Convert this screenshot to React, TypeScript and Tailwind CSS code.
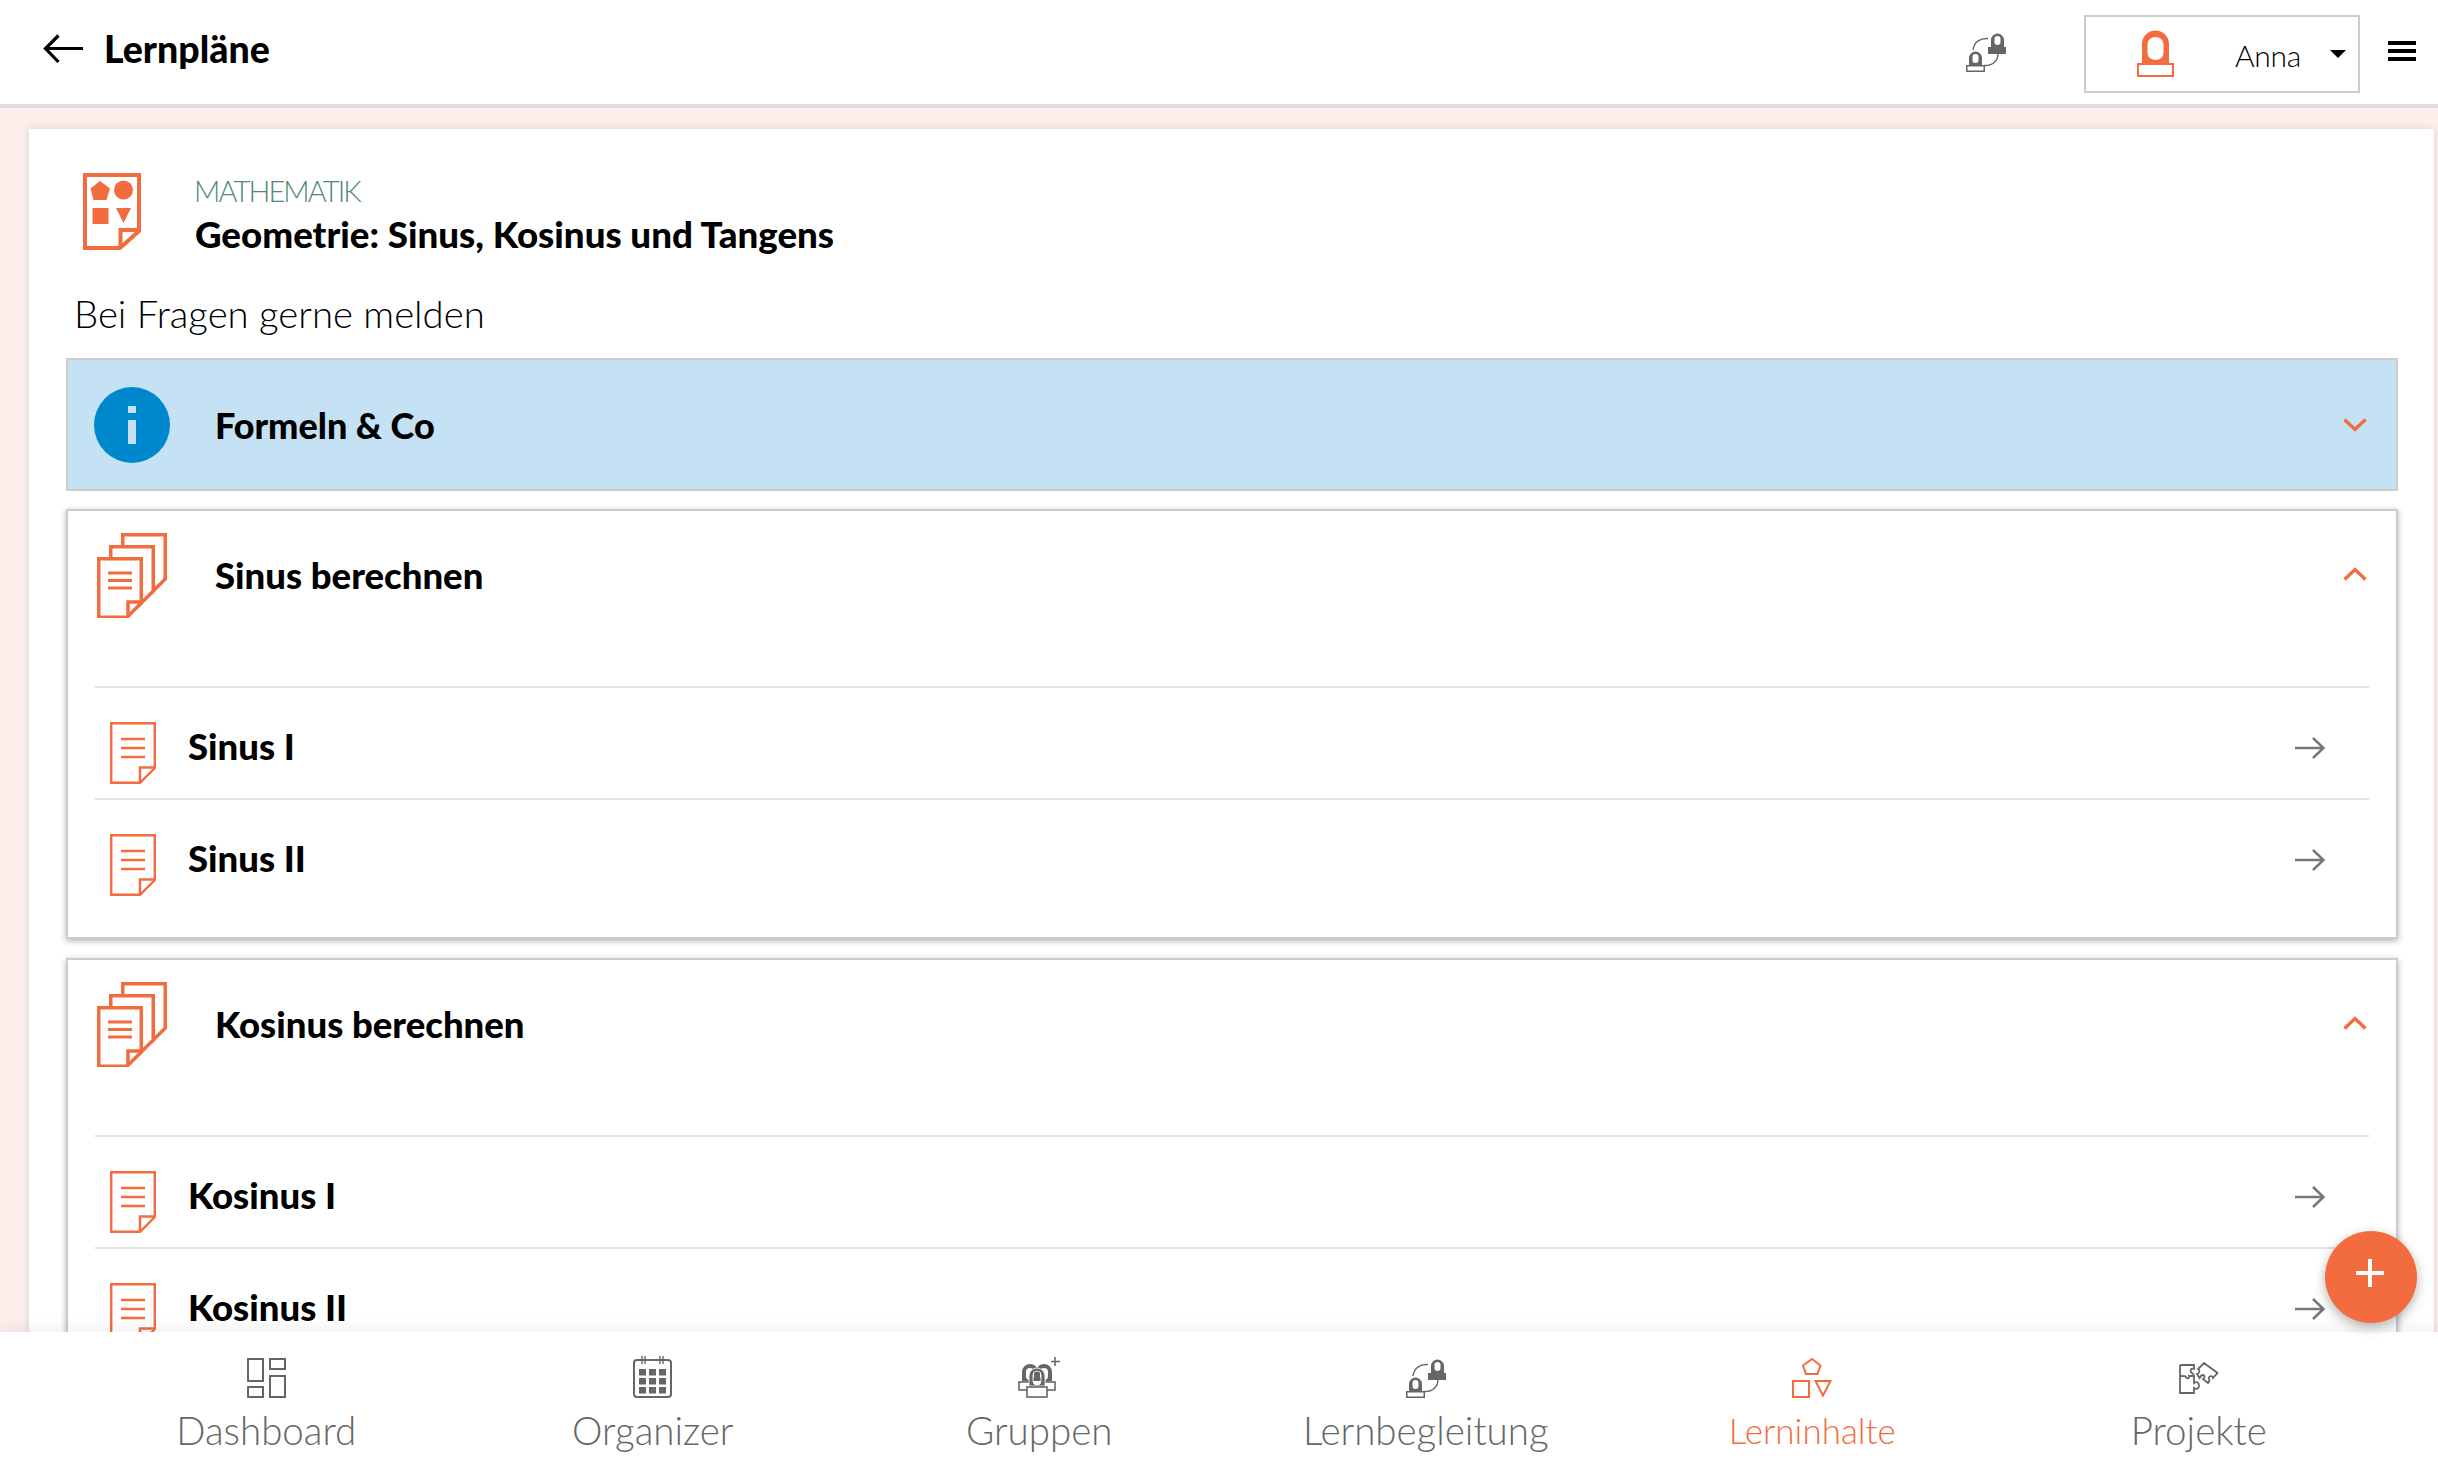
import React from "react";

const O = "#f26c3f";
const G = "#666666";

function Sheet({ x, y }: { x: number; y: number }) {
  return (
    <g transform={`translate(${x} ${y})`}>
      <path d="M1.75 1.75H44.25V46L30 60.25H1.75Z" fill="#fff" stroke={O} strokeWidth="3.5" />
    </g>
  );
}

function StackIcon() {
  return (
    <svg width="70" height="85" viewBox="0 0 70 85" className="shrink-0">
      <Sheet x={24} y={0} />
      <Sheet x={12} y={12} />
      <Sheet x={0} y={24} />
      <path d="M45 69H31V84" fill="none" stroke={O} strokeWidth="3.5" />
      <path d="M11 40H35M11 47.5H35M11 55H35" stroke={O} strokeWidth="3.2" />
    </svg>
  );
}

function DocIcon() {
  return (
    <svg width="46" height="62" viewBox="0 0 46 62" className="mt-[13px] shrink-0">
      <path d="M1.2 1.2H44.8V46L30 60.8H1.2Z" fill="#fff" stroke={O} strokeWidth="2.4" />
      <path d="M45 45.5H30V61" fill="none" stroke={O} strokeWidth="2.4" />
      <path d="M11 17H35M11 26H35M11 35H35" stroke={O} strokeWidth="2.4" />
    </svg>
  );
}

function SubjectIcon() {
  return (
    <svg width="58" height="77" viewBox="0 0 58 77" className="shrink-0">
      <path d="M2 2H56V58L37 75H2Z" fill="#fff" stroke={O} strokeWidth="4" />
      <path d="M56 57H37.5V75" fill="none" stroke={O} strokeWidth="4" />
      <path d="M17 8L27 15.5L23.5 27H10.5L7.5 15.5Z" fill={O} />
      <circle cx="40.5" cy="17" r="9.5" fill={O} />
      <rect x="9.5" y="35" width="16" height="16" fill={O} />
      <path d="M33 35H48L40.5 50Z" fill={O} />
    </svg>
  );
}

function Person({ x, y, filledBase, color }: { x: number; y: number; filledBase: boolean; color: string }) {
  return (
    <g transform={`translate(${x} ${y})`}>
      <path
        fillRule="evenodd"
        fill={color}
        d="M3 15V8a6.5 6.5 0 0 1 13 0V15ZM6.5 7V10a3 3 0 0 0 6 0V7a3 3 0 0 0-6 0Z"
      />
      <rect x="0.75" y="15.75" width="17.5" height="5.5" fill={filledBase ? color : "#fff"} stroke={color} strokeWidth="1.5" />
    </g>
  );
}

function GuideIcon({ size = 40 }: { size?: number }) {
  return (
    <svg width={size} height={size} viewBox="0 0 40 40" className="shrink-0">
      <path d="M7 18C8 10 14 6 22 6.5M32 22C32 28 27 34 18 33.5" fill="none" stroke={G} strokeWidth="1.4" />
      <Person x={22} y={0} filledBase color={G} />
      <Person x={0} y={18} filledBase={false} color={G} />
    </svg>
  );
}

function AvatarIcon() {
  return (
    <svg width="37" height="47" viewBox="0 0 37 47" className="shrink-0">
      <path
        fillRule="evenodd"
        fill={O}
        d="M5 33V14a13.5 13.5 0 0 1 27 0V33ZM10.5 14V23a8 7 0 0 0 16 0V14a8 7 0 0 0-16 0Z"
      />
      <rect x="1" y="34" width="35" height="12" fill="#fff" stroke={O} strokeWidth="2" />
    </svg>
  );
}

function DashboardIcon() {
  return (
    <svg width="39" height="40" viewBox="0 0 39 40" className="shrink-0" fill="none" stroke={G} strokeWidth="2">
      <rect x="1" y="1" width="15" height="22" />
      <rect x="23" y="1" width="15" height="10" />
      <rect x="1" y="29" width="15" height="10" />
      <rect x="23" y="18" width="15" height="21" />
    </svg>
  );
}

function OrganizerIcon() {
  const cells: number[][] = [];
  for (const y of [13, 22, 31]) for (const x of [6, 16, 26]) cells.push([x, y]);
  return (
    <svg width="39" height="42" viewBox="0 0 39 42" className="shrink-0">
      <rect x="1" y="4" width="37" height="37" rx="3" fill="none" stroke={G} strokeWidth="2" />
      <path d="M9 0V8M12 0V8M27 0V8M30 0V8" stroke={G} strokeWidth="1.4" />
      {cells.map(([x, y]) => (
        <rect key={`${x}-${y}`} x={x} y={y} width="7" height="6.5" fill={G} />
      ))}
    </svg>
  );
}

function GroupIcon() {
  return (
    <svg width="42" height="41" viewBox="0 0 42 41" className="shrink-0">
      <path d="M37 0V9M33 4.5H42" stroke={G} strokeWidth="1.6" />
      <path fillRule="evenodd" fill={G} d="M4 24V15a8 8 0 0 1 16 0V24ZM8 15V19a4 4 0 0 0 8 0V15a4 4 0 0 0-8 0Z" />
      <path fillRule="evenodd" fill={G} d="M18 24V15a8 8 0 0 1 16 0V24ZM22 15V19a4 4 0 0 0 8 0V15a4 4 0 0 0-8 0Z" />
      <rect x="1" y="25" width="12" height="8" fill="#fff" stroke={G} strokeWidth="1.6" />
      <rect x="25" y="25" width="12" height="8" fill="#fff" stroke={G} strokeWidth="1.6" />
      <path fillRule="evenodd" fill={G} d="M11 29V19a8 8 0 0 1 16 0V29ZM15 18V24a4 4 0 0 0 8 0V18a4 4 0 0 0-8 0Z" stroke="#fff" strokeWidth="0.8" />
      <rect x="9" y="30" width="20" height="10" fill="#fff" stroke={G} strokeWidth="1.6" />
    </svg>
  );
}

function ShapesIcon() {
  return (
    <svg width="40" height="40" viewBox="0 0 40 40" className="shrink-0" fill="none" stroke={O} strokeWidth="2">
      <path d="M20 1L28.5 7.5L25.5 16H14L11 7.5Z" />
      <rect x="1" y="23" width="16" height="16" />
      <path d="M23.5 23H38.5L31 37.5Z" />
    </svg>
  );
}

function PuzzleIcon() {
  return (
    <svg width="40" height="32" viewBox="0 0 40 32" className="shrink-0" fill="none" stroke={G} strokeWidth="1.8">
      <path d="M1 3H15V7C12 6 11 8 12 10C13 12 15 11 15 14H10C11 17 7 17 7 15C6 14 6 14 1 14" />
      <path d="M1 3V31H15V26C18 28 20 26 20 23.5C20 21 18 19 15 21V14" />
      <path d="M25 1L38.5 11L34 16C33 13 29 14 30 17C30.5 18.5 31 19 29 21L24 17C26 16 26 13 24 13C22 13 21 15 20.5 16L18 12C21 11 21 8 19 7Z" />
    </svg>
  );
}

function RowArrow() {
  return (
    <svg width="30" height="24" viewBox="0 0 30 24" className="mt-[4px] shrink-0" fill="none" stroke="#777777" strokeWidth="2.6">
      <path d="M0 12H28M18 2L28.5 12L18 22" />
    </svg>
  );
}

function Chevron({ up }: { up: boolean }) {
  return (
    <svg width="24" height="14" viewBox="0 0 24 14" className="shrink-0" fill="none" stroke={O} strokeWidth="3.4">
      <path d={up ? "M1.5 12.5L12 2.5L22.5 12.5" : "M1.5 1.5L12 11.5L22.5 1.5"} />
    </svg>
  );
}

function Row({ label }: { label: string }) {
  return (
    <div className="flex h-[112px] items-center border-t-2 border-[#e2e2e2] pl-[15px] pr-[44px] pt-[6px]">
      <DocIcon />
      <span className="ml-[32px] flex-1 text-[36.5px] font-black text-black">{label}</span>
      <RowArrow />
    </div>
  );
}

function Section({ title, rows }: { title: string; rows: string[] }) {
  return (
    <section className="mb-[19px] border-2 border-[#cccccc] bg-white px-[27px] pb-[27px] shadow-[0_2px_6px_rgba(0,0,0,0.3)]">
      <div className="flex h-[175px] items-start pt-[22px]">
        <div className="ml-[2px] w-[118px] shrink-0">
          <StackIcon />
        </div>
        <span className="mt-[21px] flex-1 text-[36.5px] font-black leading-[42px] text-black">{title}</span>
        <div className="mr-[2px] mt-[34px]">
          <Chevron up />
        </div>
      </div>
      {rows.map((r) => (
        <Row key={r} label={r} />
      ))}
    </section>
  );
}

function NavItem({ label, icon, active, h }: { label: string; icon: React.ReactNode; active?: boolean; h?: string }) {
  return (
    <div className={`flex flex-col items-center ${active ? "text-[#f26c3f]" : "text-[#666666]"}`}>
      <div className={`flex h-[46px] items-end ${h ?? ""}`}>{icon}</div>
      <span className={`mt-[9px] font-light leading-[46px] ${active ? "text-[35px]" : "text-[38.5px]"}`}>{label}</span>
    </div>
  );
}

export default function App() {
  return (
    <div
      className="relative flex h-screen w-full flex-col overflow-hidden bg-[#fcefeb] text-black"
      style={{ fontFamily: '"Lato", "Noto Sans", sans-serif' }}
    >
      <header className="flex h-[108px] shrink-0 items-center border-b-4 border-[#dddddd] bg-white pl-[43px] pr-[22px]">
        <svg width="40" height="30" viewBox="0 0 40 30" className="-mt-[6px] shrink-0" fill="none" stroke="#000" strokeWidth="3.2">
          <path d="M40 14.5H3M15.5 1.5L2.5 14.5L15.5 28" />
        </svg>
        <h1 className="-mt-[6px] ml-[21px] flex-1 text-[37.5px] font-black leading-none">Lernpläne</h1>
        <GuideIcon />
        <div className="ml-[78px] mt-[3px] flex h-[78px] w-[276px] items-center border-2 border-[#cccccc] pl-[51px] pr-[12px]">
          <AvatarIcon />
          <span className="ml-[61px] mt-[3px] flex-1 text-[30px] font-light tracking-[-0.3px]">Anna</span>
          <span className="h-0 w-0 border-x-[8px] border-t-[8px] border-x-transparent border-t-black" />
        </div>
        <div className="-mt-[3px] ml-[28px] flex w-[28px] flex-col gap-[4px]">
          <span className="h-[4px] bg-black" />
          <span className="h-[4px] bg-black" />
          <span className="h-[4px] bg-black" />
        </div>
      </header>

      <main className="min-h-0 flex-1 overflow-hidden pl-[29px] pr-[4px] pt-[21px]">
        <div className="bg-white pl-[37px] pr-[36px] shadow-[0_0_8px_rgba(0,0,0,0.12)]">
          <div className="flex h-[157px] items-start pl-[17px] pt-[44px]">
            <SubjectIcon />
            <div className="ml-[54px]">
              <div className="-ml-[1px] text-[29px] font-light leading-[36px] tracking-[-1.9px] text-[#4f8877]">MATHEMATIK</div>
              <div className="mt-[2px] text-[36.7px] font-black leading-[46px]">Geometrie: Sinus, Kosinus und Tangens</div>
            </div>
          </div>
          <p className="h-[72px] pl-[8px] text-[38.3px] font-light leading-[54px]">Bei Fragen gerne melden</p>

          <div className="mb-[18px] flex h-[133px] items-center border-2 border-[#cccccc] bg-[#c5e1f4] pl-[26px] pr-[29px]">
            <div className="flex h-[76px] w-[76px] shrink-0 flex-col items-center justify-center gap-[7px] rounded-full bg-[#0088cf]">
              <span className="h-[7px] w-[8px] bg-[#c5e1f4]" />
              <span className="h-[24px] w-[8px] bg-[#c5e1f4]" />
            </div>
            <span className="ml-[45px] flex-1 text-[36px] font-black">Formeln &amp; Co</span>
            <Chevron up={false} />
          </div>

          <Section title="Sinus berechnen" rows={["Sinus I", "Sinus II"]} />
          <Section title="Kosinus berechnen" rows={["Kosinus I", "Kosinus II"]} />
        </div>
      </main>

      <nav className="relative z-10 grid h-[130px] shrink-0 grid-cols-6 bg-white pl-[73px] pr-[46px] pt-[20px] shadow-[0_-6px_14px_rgba(0,0,0,0.05)]">
        <NavItem label="Dashboard" icon={<DashboardIcon />} />
        <NavItem label="Organizer" icon={<OrganizerIcon />} />
        <NavItem label="Gruppen" icon={<GroupIcon />} />
        <NavItem label="Lernbegleitung" icon={<GuideIcon />} />
        <NavItem label="Lerninhalte" active icon={<ShapesIcon />} />
        <NavItem label="Projekte" h="pb-[4px]" icon={<PuzzleIcon />} />
      </nav>

      <button className="absolute left-[2325px] top-[1231px] z-20 flex h-[92px] w-[92px] items-center justify-center rounded-full bg-[#f26c3f] shadow-[0_4px_12px_rgba(0,0,0,0.3)]">
        <svg width="28" height="28" viewBox="0 0 28 28" className="-translate-x-[1px] -translate-y-[4px]" stroke="#fff" strokeWidth="4">
          <path d="M0 14H28M14 0V28" />
        </svg>
      </button>
    </div>
  );
}
